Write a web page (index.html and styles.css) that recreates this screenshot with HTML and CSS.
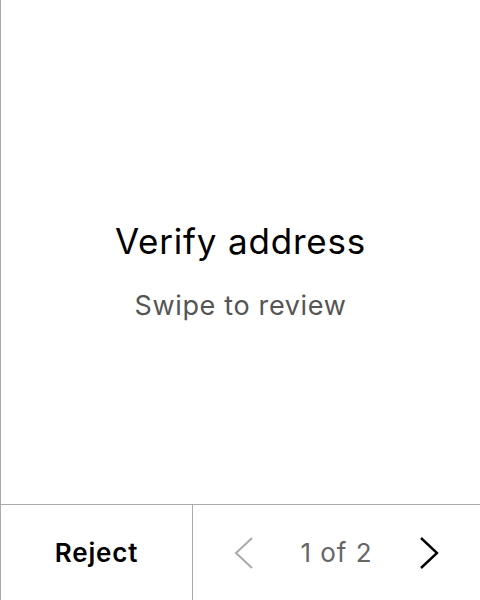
FILE: index.html
```html
<!DOCTYPE html>
<html>
<head>
<meta charset="utf-8">
<link rel="stylesheet" href="styles.css">
</head>
<body>
<div class="screen">
  <main class="content">
    <h1 class="title">Verify address</h1>
    <p class="subtitle">Swipe to review</p>
  </main>
  <footer class="bar">
    <div class="reject">Reject</div>
    <div class="pager">
      <svg class="chev prev" width="24" height="32" viewBox="0 0 24 32"><polyline points="20,1 4,16 20,31" fill="none" stroke="currentColor" stroke-width="2"/></svg>
      <span class="count">1 of 2</span>
      <svg class="chev next" width="24" height="32" viewBox="0 0 24 32"><polyline points="4,1 20,16 4,31" fill="none" stroke="currentColor" stroke-width="2.4"/></svg>
    </div>
  </footer>
</div>
</body>
</html>
```
FILE: styles.css
```css
html, body {
  margin: 0;
  padding: 0;
  background: #fff;
}
body {
  font-family: Inter, "Noto Sans", sans-serif;
}
.screen {
  width: 480px;
  height: 600px;
  box-sizing: border-box;
  border-left: 1px solid #aaa;
  display: flex;
  flex-direction: column;
}
.content {
  flex: 1;
  display: flex;
  flex-direction: column;
  align-items: center;
  justify-content: center;
  padding-top: 38px;
}
.title {
  margin: 0;
  font-size: 35px;
  font-weight: 400;
  letter-spacing: 0.8px;
  color: #000;
  line-height: 40px;
}
.subtitle {
  margin: 30px 0 0;
  font-size: 27px;
  letter-spacing: 0.65px;
  color: #555;
  line-height: 30px;
}
.bar {
  height: 96px;
  box-sizing: border-box;
  border-top: 1px solid #aaa;
  display: flex;
}
.reject {
  width: 191px;
  border-right: 1px solid #aaa;
  display: flex;
  align-items: center;
  justify-content: center;
  font-size: 26px;
  font-weight: 600;
  letter-spacing: 0.85px;
  color: #000;
}
.pager {
  flex: 1;
  display: flex;
  align-items: center;
  justify-content: center;
  gap: 45px;
}
.count {
  font-size: 26px;
  letter-spacing: 0.95px;
  color: #666;
}
.chev.prev { color: #aaa; }
.chev.next { color: #000; }
```
